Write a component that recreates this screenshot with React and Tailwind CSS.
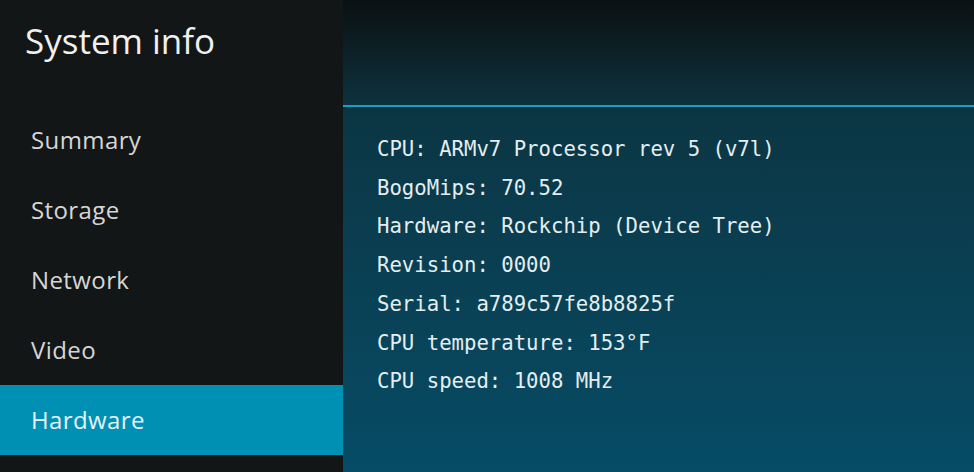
const menu = ["Summary", "Storage", "Network", "Video", "Hardware"];

const info = [
  "CPU: ARMv7 Processor rev 5 (v7l)",
  "BogoMips: 70.52",
  "Hardware: Rockchip (Device Tree)",
  "Revision: 0000",
  "Serial: a789c57fe8b8825f",
  "CPU temperature: 153°F",
  "CPU speed: 1008 MHz",
];

export default function App() {
  const selected = "Hardware";

  return (
    <div className="flex w-[974px] h-[472px] overflow-hidden bg-[#0b1315]">
      <aside className="flex flex-col w-[343px] shrink-0 bg-[#131617] font-['Open_Sans',sans-serif]">
        <div className="h-[105px] pl-[25px] pt-[15px]">
          <h1 className="text-[35px] leading-[52px] text-[#f0f0f0] font-normal">
            System info
          </h1>
        </div>
        {menu.map((item) => (
          <div
            key={item}
            className={`flex items-center h-[70px] pl-[31px] text-[24px] tracking-[0.4px] ${
              item === selected ? "bg-[#0090b4] text-[#e6f2f6]" : "text-[#d6d6d6]"
            }`}
          >
            {item}
          </div>
        ))}
      </aside>

      <main className="flex flex-col flex-1 bg-gradient-to-b from-[#0a1112] via-[#0b3644] via-25% to-[#064c66]">
        <div className="h-[105px]" />
        <div className="h-[2px] bg-[#1b9fc3]" />
        <div className="flex-1 pl-[34px] pt-[23px] font-['DejaVu_Sans_Mono',monospace] text-[20.65px] leading-[38.7px] text-[#e4eef1]">
          {info.map((line) => (
            <div key={line} className="whitespace-pre">
              {line}
            </div>
          ))}
        </div>
      </main>
    </div>
  );
}
